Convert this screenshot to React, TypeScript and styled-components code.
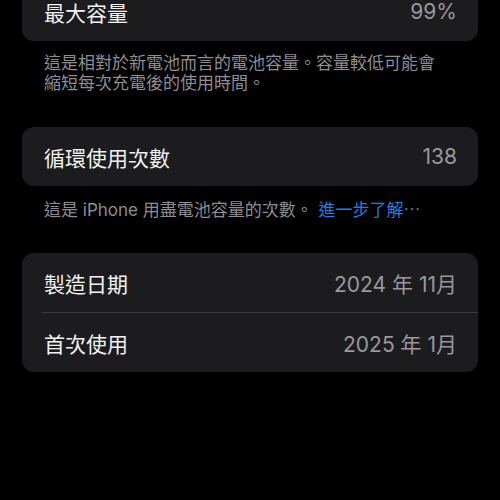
import React from "react";
import styled, { createGlobalStyle } from "styled-components";

const Global = createGlobalStyle`
  html, body { margin: 0; padding: 0; background: #000; }
  body { font-family: "Inter", "Noto Sans CJK TC", sans-serif; -webkit-font-smoothing: antialiased; }
`;

const Page = styled.div`
  width: 500px;
  height: 500px;
  overflow: hidden;
  background: #000;
  box-sizing: border-box;
  padding: 0 22px;
`;

const Inner = styled.div`
  display: flex;
  flex-direction: column;
  margin-top: -18px;
`;

const Card = styled.div<{ $gap?: number }>`
  background: #1c1c1e;
  border-radius: 12px;
  overflow: hidden;
  margin-top: ${(p) => p.$gap ?? 0}px;
`;

const Row = styled.div`
  height: 59px;
  display: flex;
  align-items: center;
  justify-content: space-between;
  padding: 0 21px 0 22px;
`;

const Label = styled.span`
  font-size: 21px;
  color: #f2f2f2;
  font-family: "Noto Sans CJK TC", sans-serif;
`;

const Value = styled.span`
  font-size: 21px;
  color: #98989e;
  font-family: "Inter", "Noto Sans CJK TC", sans-serif;
`;

const Footer = styled.p<{ $top: number }>`
  margin: ${(p) => p.$top}px 0 0;
  padding: 0 34px 0 22px;
  font-size: 17px;
  line-height: 20px;
  color: #8d8d93;
  font-family: "Inter", "Noto Sans CJK TC", sans-serif;
`;

const Link = styled.span`
  color: #1a7fe8;
  margin-left: 1px;
`;

const Dots = styled.span`
  color: #4a6f98;
`;

const Sep = styled.div`
  height: 1px;
  background: #38383a;
  margin-left: 20px;
`;

export default function App() {
  return (
    <>
      <Global />
      <Page>
        <Inner>
          <Card>
            <Row>
              <Label>最大容量</Label>
              <Value>99%</Value>
            </Row>
          </Card>
          <Footer $top={12}>
            這是相對於新電池而言的電池容量。容量較低可能會縮短每次充電後的使用時間。
          </Footer>
          <Card $gap={34}>
            <Row>
              <Label>循環使用次數</Label>
              <Value>138</Value>
            </Row>
          </Card>
          <Footer $top={14}>
            這是 iPhone 用盡電池容量的次數。 <Link>進一步了解</Link>
            <Dots>⋯</Dots>
          </Footer>
          <Card $gap={33}>
            <Row>
              <Label>製造日期</Label>
              <Value>2024 年 11月</Value>
            </Row>
            <Sep />
            <Row>
              <Label>首次使用</Label>
              <Value>2025 年 1月</Value>
            </Row>
          </Card>
        </Inner>
      </Page>
    </>
  );
}
